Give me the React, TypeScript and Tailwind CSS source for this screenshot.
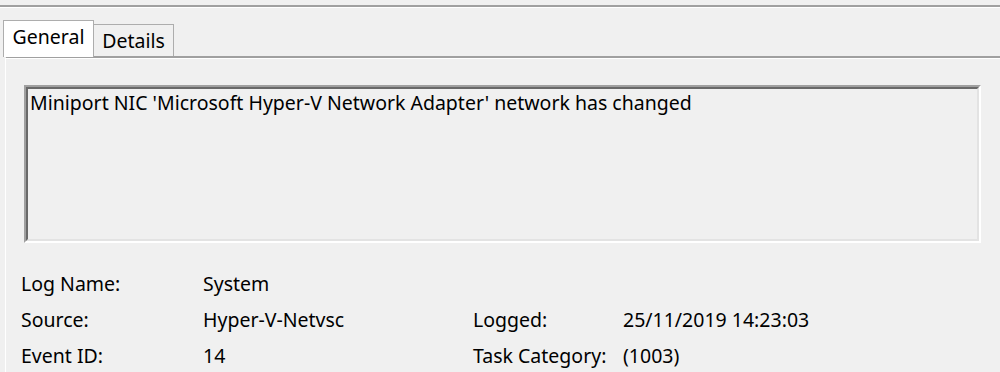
const rows = [
    { label: "Log Name:", value: "System", label2: "", value2: "" },
    { label: "Source:", value: "Hyper-V-Netvsc", label2: "Logged:", value2: "25/11/2019 14:23:03" },
    { label: "Event ID:", value: "14", label2: "Task Category:", value2: "(1003)" },
];

const App = () => {
    return (
        <div
            className="w-[1000px] h-[372px] overflow-hidden bg-[#f0f0f0] text-[19.5px] text-black"
            style={{ fontFamily: '"Noto Sans", "Open Sans", sans-serif' }}
        >
            {/* top separator */}
            <div className="h-[5px]" />
            <div className="h-[2px] bg-[#a0a0a0]" />
            <div className="h-px bg-white" />

            {/* tabs */}
            <div className="flex items-end h-[44px] pl-[3px] mt-[4px]">
                <div className="relative z-10 w-[91px] h-[37px] -mb-[1px] bg-white border border-b-0 border-[#adadad] flex items-center justify-center pb-[4px]">
                    General
                </div>
                <div className="w-[80px] h-[32px] bg-[#f0f0f0] border border-l-0 border-b-0 border-[#adadad] flex items-center justify-center">
                    Details
                </div>
            </div>

            {/* panel */}
            <div className="ml-[5px] border-t-2 border-[#a0a0a0] border-l border-l-white">
                <div className="h-px bg-white" />
                <div className="pl-[18px] pr-[19px] pt-[26px]">
                    <div className="h-[158px] border-2 border-t-[#a0a0a0] border-l-[#a0a0a0] border-b-white border-r-white">
                        <div className="h-full border-2 border-t-[#696969] border-l-[#696969] border-b-[#e3e3e3] border-r-[#e3e3e3] px-[2px] pt-[1px] leading-[26px]">
                            Miniport NIC 'Microsoft Hyper-V Network Adapter' network has changed
                        </div>
                    </div>
                </div>

                <div className="pl-[15px] pt-[23px]">
                    {rows.map((r) => (
                        <div key={r.label} className="flex h-[36px] items-center">
                            <div className="w-[182px]">{r.label}</div>
                            <div className="w-[270px]">{r.value}</div>
                            <div className="w-[150px]">{r.label2}</div>
                            <div>{r.value2}</div>
                        </div>
                    ))}
                </div>
            </div>
        </div>
    );
};

export default App;
